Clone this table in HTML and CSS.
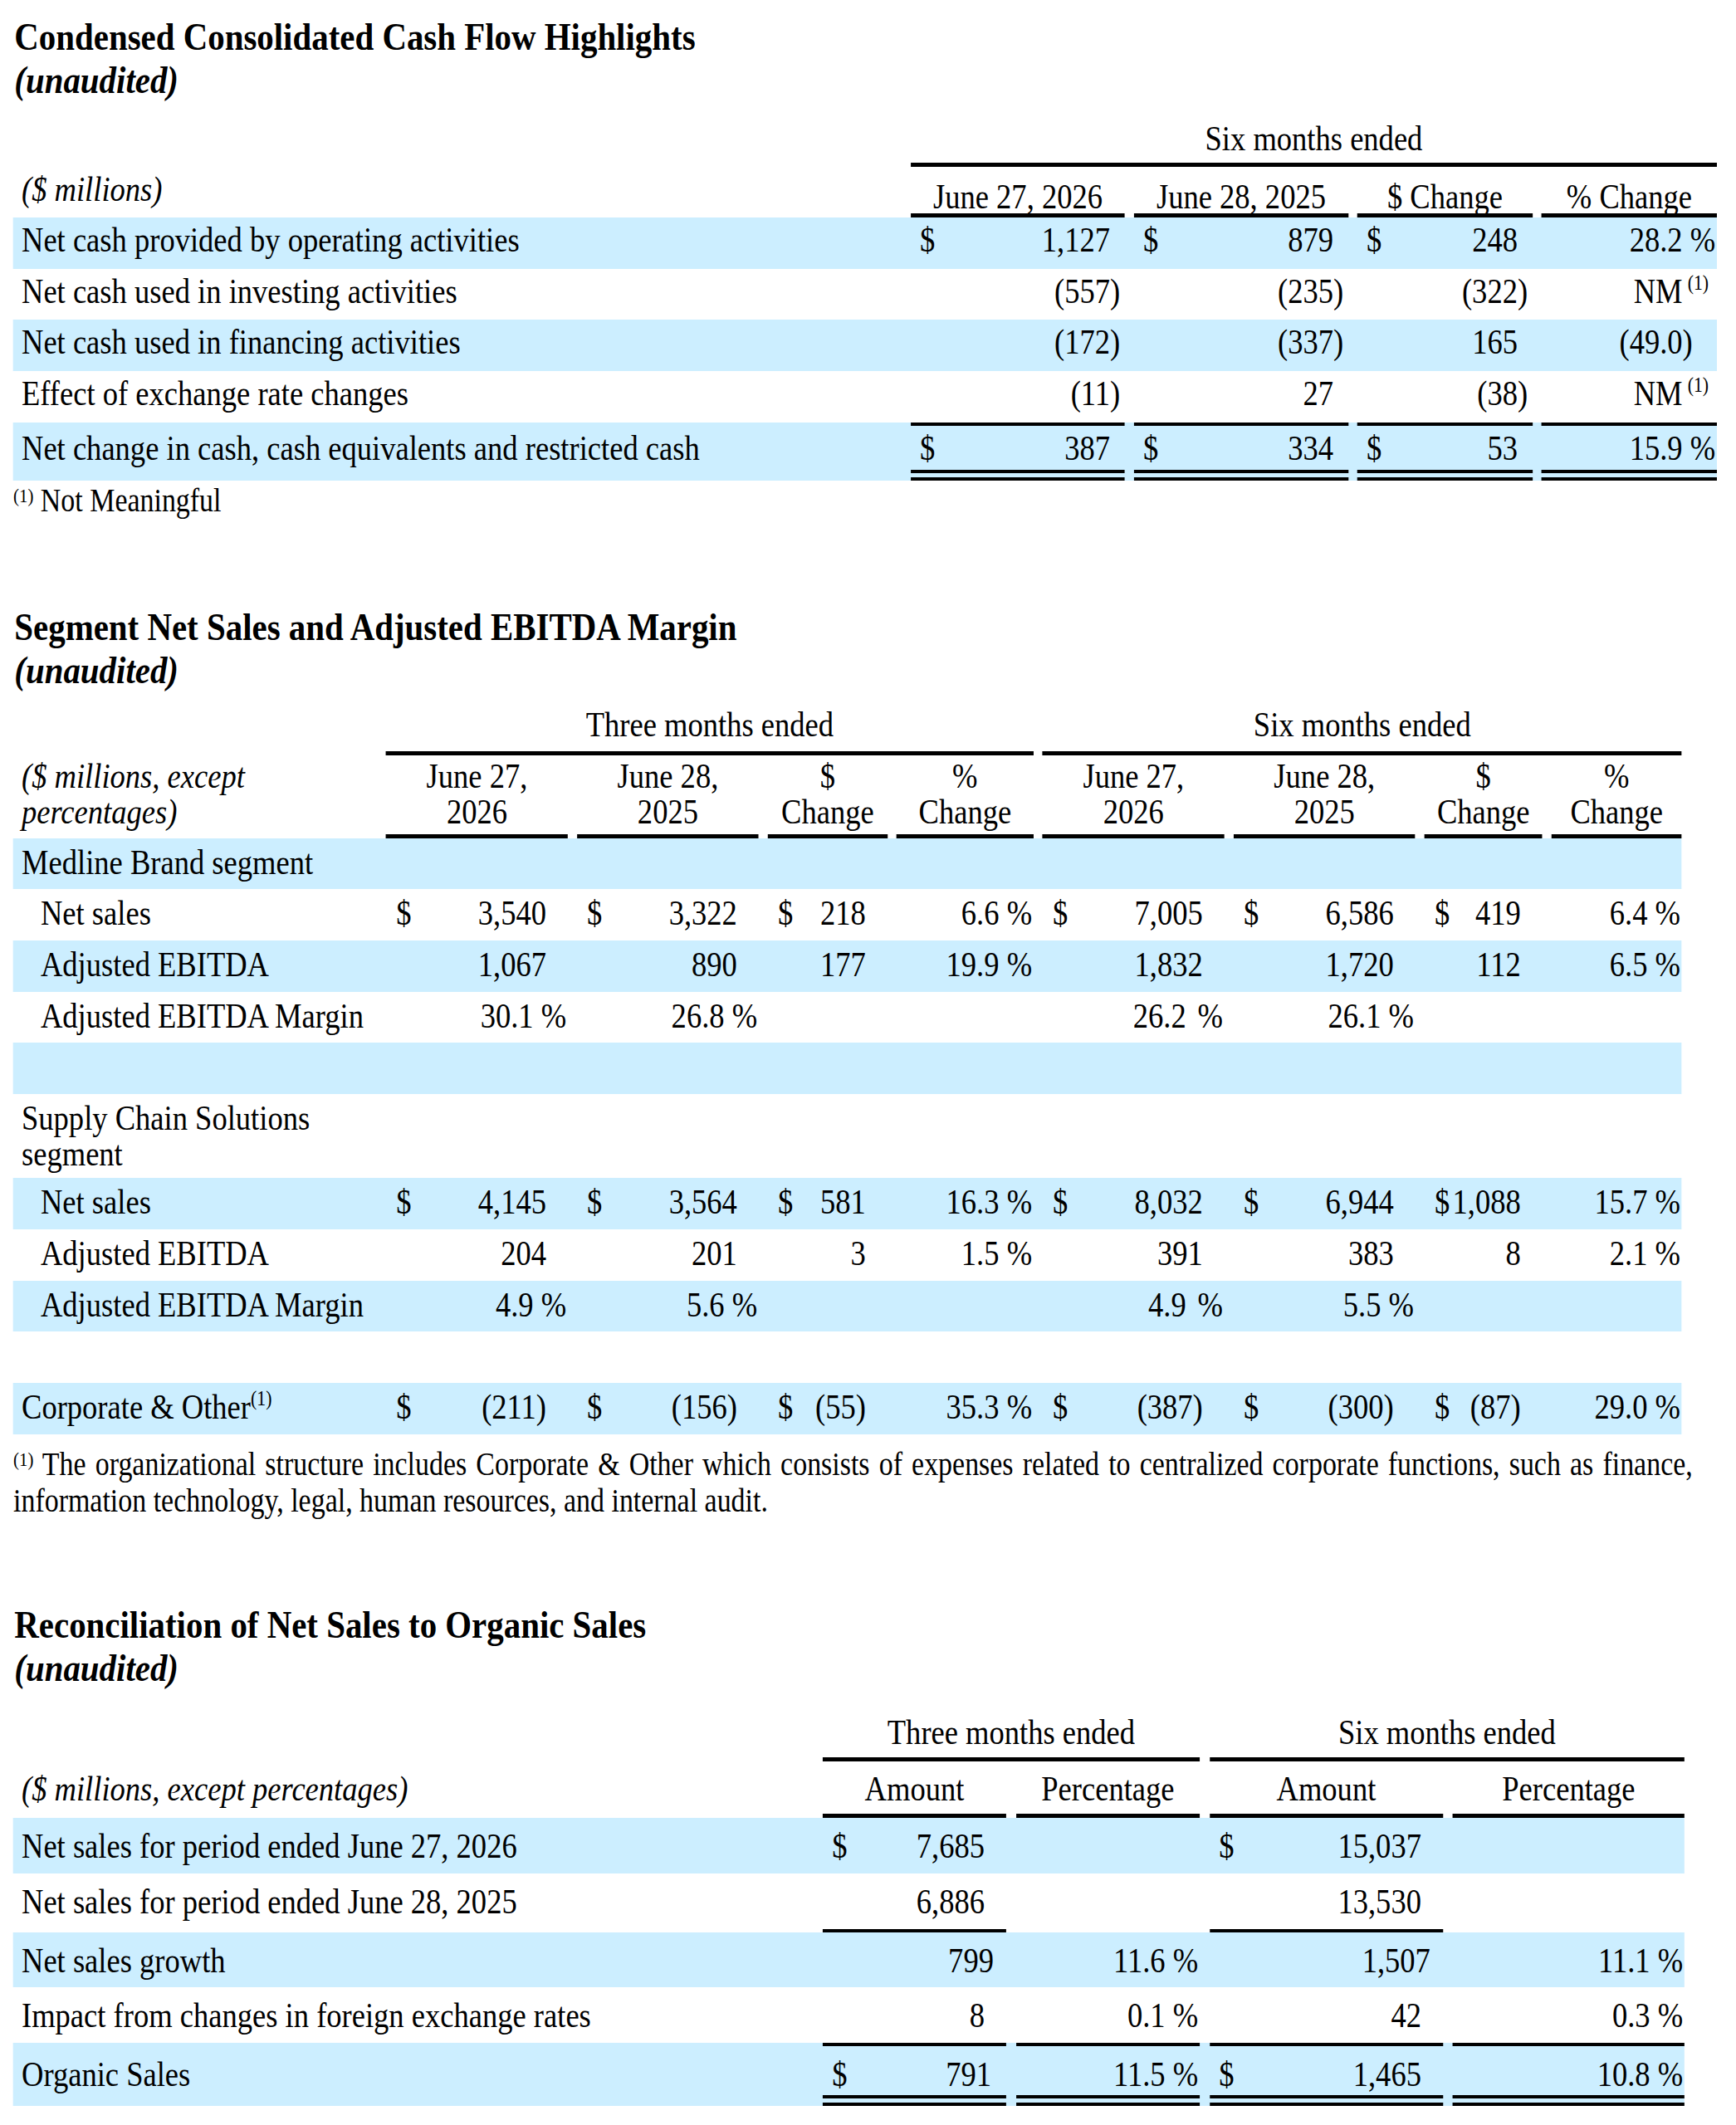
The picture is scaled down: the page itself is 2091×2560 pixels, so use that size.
FILE: index.html
```html
<!DOCTYPE html>
<html lang="en">
<head>
<meta charset="utf-8">
<title>Cash Flow Highlights</title>
<link rel="stylesheet" href="styles.css">
</head>
<body>
<div class="frame">
<div class="page">

<section class="sec s1">
  <div class="title">Condensed Consolidated Cash Flow Highlights<br><i>(unaudited)</i></div>
  <div class="tbl t1">
    <div class="r gr"><div></div><div class="g g-all">Six months ended</div></div>
    <div class="r hd">
      <div class="lh">($ millions)</div>
      <div class="h">June 27, 2026</div><div class="h">June 28, 2025</div><div class="h">$ Change</div><div class="h">% Change</div>
    </div>
    <div class="r bl">
      <div class="lb">Net cash provided by operating activities</div>
      <div class="v"><span class="cur">$</span><span class="n">1,127</span><span class="s"></span></div>
      <div class="v"><span class="cur">$</span><span class="n">879</span><span class="s"></span></div>
      <div class="v"><span class="cur">$</span><span class="n">248</span><span class="s"></span></div>
      <div class="v"><span class="n">28.2</span><span class="pc">%</span></div>
    </div>
    <div class="r">
      <div class="lb">Net cash used in investing activities</div>
      <div class="v"><span class="n">(557</span><span class="s">)</span></div>
      <div class="v"><span class="n">(235</span><span class="s">)</span></div>
      <div class="v"><span class="n">(322</span><span class="s">)</span></div>
      <div class="v"><span class="n">NM</span><span class="pn"><sup class="up">(1)</sup></span></div>
    </div>
    <div class="r bl">
      <div class="lb">Net cash used in financing activities</div>
      <div class="v"><span class="n">(172</span><span class="s">)</span></div>
      <div class="v"><span class="n">(337</span><span class="s">)</span></div>
      <div class="v"><span class="n">165</span><span class="s"></span></div>
      <div class="v"><span class="n">(49.0</span><span class="pp">)</span></div>
    </div>
    <div class="r">
      <div class="lb">Effect of exchange rate changes</div>
      <div class="v"><span class="n">(11</span><span class="s">)</span></div>
      <div class="v"><span class="n">27</span><span class="s"></span></div>
      <div class="v"><span class="n">(38</span><span class="s">)</span></div>
      <div class="v"><span class="n">NM</span><span class="pn"><sup class="up">(1)</sup></span></div>
    </div>
    <div class="r bl total">
      <div class="lb">Net change in cash, cash equivalents and restricted cash</div>
      <div class="v tot"><span class="cur">$</span><span class="n">387</span><span class="s"></span></div>
      <div class="v tot"><span class="cur">$</span><span class="n">334</span><span class="s"></span></div>
      <div class="v tot"><span class="cur">$</span><span class="n">53</span><span class="s"></span></div>
      <div class="v tot"><span class="n">15.9</span><span class="pc">%</span></div>
    </div>
  </div>
  <div class="fn fn1"><sup class="fs">(1)</sup> Not Meaningful</div>
</section>

<section class="sec s2">
  <div class="title">Segment Net Sales and Adjusted EBITDA Margin<br><i>(unaudited)</i></div>
  <div class="tbl t2">
    <div class="r gr"><div></div><div class="g g-a">Three months ended</div><div class="g g-b">Six months ended</div></div>
    <div class="r hd">
      <div class="lh">($ millions, except<br>percentages)</div>
      <div class="h">June 27,<br>2026</div><div class="h">June 28,<br>2025</div><div class="h">$<br>Change</div><div class="h">%<br>Change</div>
      <div class="h">June 27,<br>2026</div><div class="h">June 28,<br>2025</div><div class="h">$<br>Change</div><div class="h">%<br>Change</div>
    </div>
    <div class="r bl">
      <div class="lb">Medline Brand segment</div>
      <div></div><div></div><div></div><div></div><div></div><div></div><div></div><div></div>
    </div>
    <div class="r">
      <div class="lb ind">Net sales</div>
      <div class="v"><span class="cur">$</span><span class="n">3,540</span><span class="s"></span></div>
      <div class="v"><span class="cur">$</span><span class="n">3,322</span><span class="s"></span></div>
      <div class="v"><span class="cur">$</span><span class="n">218</span><span class="s"></span></div>
      <div class="v"><span class="n">6.6</span><span class="pc">%</span></div>
      <div class="v"><span class="cur">$</span><span class="n">7,005</span><span class="s"></span></div>
      <div class="v"><span class="cur">$</span><span class="n">6,586</span><span class="s"></span></div>
      <div class="v"><span class="cur">$</span><span class="n">419</span><span class="s"></span></div>
      <div class="v"><span class="n">6.4</span><span class="pc">%</span></div>
    </div>
    <div class="r bl">
      <div class="lb ind">Adjusted EBITDA</div>
      <div class="v"><span class="n">1,067</span><span class="s"></span></div>
      <div class="v"><span class="n">890</span><span class="s"></span></div>
      <div class="v"><span class="n">177</span><span class="s"></span></div>
      <div class="v"><span class="n">19.9</span><span class="pc">%</span></div>
      <div class="v"><span class="n">1,832</span><span class="s"></span></div>
      <div class="v"><span class="n">1,720</span><span class="s"></span></div>
      <div class="v"><span class="n">112</span><span class="s"></span></div>
      <div class="v"><span class="n">6.5</span><span class="pc">%</span></div>
    </div>
    <div class="r">
      <div class="lb ind">Adjusted EBITDA Margin</div>
      <div class="v"><span class="n">30.1</span><span class="pc">%</span></div>
      <div class="v"><span class="n">26.8</span><span class="pc">%</span></div>
      <div></div><div></div>
      <div class="v"><span class="n">26.2</span><span class="pc wide">%</span></div>
      <div class="v"><span class="n">26.1</span><span class="pc">%</span></div>
      <div></div><div></div>
    </div>
    <div class="r bl">
      <div></div><div></div><div></div><div></div><div></div><div></div><div></div><div></div><div></div>
    </div>
    <div class="r tall">
      <div class="lb wrap">Supply Chain Solutions<br>segment</div>
      <div></div><div></div><div></div><div></div><div></div><div></div><div></div><div></div>
    </div>
    <div class="r bl">
      <div class="lb ind">Net sales</div>
      <div class="v"><span class="cur">$</span><span class="n">4,145</span><span class="s"></span></div>
      <div class="v"><span class="cur">$</span><span class="n">3,564</span><span class="s"></span></div>
      <div class="v"><span class="cur">$</span><span class="n">581</span><span class="s"></span></div>
      <div class="v"><span class="n">16.3</span><span class="pc">%</span></div>
      <div class="v"><span class="cur">$</span><span class="n">8,032</span><span class="s"></span></div>
      <div class="v"><span class="cur">$</span><span class="n">6,944</span><span class="s"></span></div>
      <div class="v"><span class="cur">$</span><span class="n">1,088</span><span class="s"></span></div>
      <div class="v"><span class="n">15.7</span><span class="pc">%</span></div>
    </div>
    <div class="r">
      <div class="lb ind">Adjusted EBITDA</div>
      <div class="v"><span class="n">204</span><span class="s"></span></div>
      <div class="v"><span class="n">201</span><span class="s"></span></div>
      <div class="v"><span class="n">3</span><span class="s"></span></div>
      <div class="v"><span class="n">1.5</span><span class="pc">%</span></div>
      <div class="v"><span class="n">391</span><span class="s"></span></div>
      <div class="v"><span class="n">383</span><span class="s"></span></div>
      <div class="v"><span class="n">8</span><span class="s"></span></div>
      <div class="v"><span class="n">2.1</span><span class="pc">%</span></div>
    </div>
    <div class="r bl">
      <div class="lb ind">Adjusted EBITDA Margin</div>
      <div class="v"><span class="n">4.9</span><span class="pc">%</span></div>
      <div class="v"><span class="n">5.6</span><span class="pc">%</span></div>
      <div></div><div></div>
      <div class="v"><span class="n">4.9</span><span class="pc wide">%</span></div>
      <div class="v"><span class="n">5.5</span><span class="pc">%</span></div>
      <div></div><div></div>
    </div>
    <div class="r">
      <div></div><div></div><div></div><div></div><div></div><div></div><div></div><div></div><div></div>
    </div>
    <div class="r bl">
      <div class="lb">Corporate &amp; Other<sup class="up">(1)</sup></div>
      <div class="v"><span class="cur">$</span><span class="n">(211)</span><span class="s"></span></div>
      <div class="v"><span class="cur">$</span><span class="n">(156)</span><span class="s"></span></div>
      <div class="v"><span class="cur">$</span><span class="n">(55)</span><span class="s"></span></div>
      <div class="v"><span class="n">35.3</span><span class="pc">%</span></div>
      <div class="v"><span class="cur">$</span><span class="n">(387)</span><span class="s"></span></div>
      <div class="v"><span class="cur">$</span><span class="n">(300)</span><span class="s"></span></div>
      <div class="v"><span class="cur">$</span><span class="n">(87)</span><span class="s"></span></div>
      <div class="v"><span class="n">29.0</span><span class="pc">%</span></div>
    </div>
  </div>
  <p class="fn fn2"><span class="l1"><sup class="fs">(1)</sup> The organizational structure includes Corporate &amp; Other which consists of expenses related to centralized corporate functions, such as finance,</span> <span class="l2">information technology, legal, human resources, and internal audit.</span></p>
</section>

<section class="sec s3">
  <div class="title">Reconciliation of Net Sales to Organic Sales<br><i>(unaudited)</i></div>
  <div class="tbl t3">
    <div class="r gr"><div></div><div class="g g-a">Three months ended</div><div class="g g-b">Six months ended</div></div>
    <div class="r hd">
      <div class="lh">($ millions, except percentages)</div>
      <div class="h">Amount</div><div class="h">Percentage</div><div class="h">Amount</div><div class="h">Percentage</div>
    </div>
    <div class="r bl">
      <div class="lb">Net sales for period ended June 27, 2026</div>
      <div class="v"><span class="cur">$</span><span class="n">7,685</span><span class="s"></span></div>
      <div></div>
      <div class="v"><span class="cur">$</span><span class="n">15,037</span><span class="s"></span></div>
      <div></div>
    </div>
    <div class="r under">
      <div class="lb">Net sales for period ended June 28, 2025</div>
      <div class="v ul"><span class="n">6,886</span><span class="s"></span></div>
      <div></div>
      <div class="v ul"><span class="n">13,530</span><span class="s"></span></div>
      <div></div>
    </div>
    <div class="r bl">
      <div class="lb">Net sales growth</div>
      <div class="v sh"><span class="n">799</span><span class="s"></span></div>
      <div class="v"><span class="n">11.6</span><span class="pc">%</span></div>
      <div class="v sh"><span class="n">1,507</span><span class="s"></span></div>
      <div class="v"><span class="n">11.1</span><span class="pc">%</span></div>
    </div>
    <div class="r">
      <div class="lb">Impact from changes in foreign exchange rates</div>
      <div class="v"><span class="n">8</span><span class="s"></span></div>
      <div class="v"><span class="n">0.1</span><span class="pc">%</span></div>
      <div class="v"><span class="n">42</span><span class="s"></span></div>
      <div class="v"><span class="n">0.3</span><span class="pc">%</span></div>
    </div>
    <div class="r bl total">
      <div class="lb">Organic Sales</div>
      <div class="v tot sh2"><span class="cur">$</span><span class="n">791</span><span class="s"></span></div>
      <div class="v tot"><span class="n">11.5</span><span class="pc">%</span></div>
      <div class="v tot"><span class="cur">$</span><span class="n">1,465</span><span class="s"></span></div>
      <div class="v tot"><span class="n">10.8</span><span class="pc">%</span></div>
    </div>
  </div>
</section>

</div>
</div>
</body>
</html>
```

FILE: styles.css
```css
html, body {
  margin: 0;
  padding: 0;
  background: #ffffff;
  overflow-x: hidden;
}

.frame {
  width: 2091px;
  overflow: hidden;
}

/* The source document is set in a horizontally condensed Times face:
   the whole page is laid out at full width and condensed once. */
.page {
  width: 2400px;
  transform: scaleX(0.87);
  transform-origin: 0 0;
  font-family: "Liberation Serif", "Times New Roman", serif;
  font-size: 42px;
  color: #000000;
  padding-top: 18px;
}

.title {
  font-weight: 700;
  font-size: 47px;
  line-height: 52px;
  margin-left: 1.5px;
}
.title i { font-style: italic; }

.sec { margin-left: 18.4px; }
.s2 { margin-top: 104.7px; }
.s3 { margin-top: 101.2px; }

/* ---------- generic table rows ---------- */
.tbl { width: max-content; }
.r {
  display: grid;
  grid-template-columns: var(--cols);
  column-gap: var(--gap);
  min-height: var(--rh);
}
.r.bl { background: #cceeff; }
.r > div {
  padding-top: var(--pt);
  line-height: 43px;
}

.lb {
  padding-left: 11.5px;
  white-space: nowrap;
}
.lb.ind { padding-left: 37.9px; }
.lb.wrap { white-space: normal; }

.v {
  display: flex;
  align-items: baseline;
  padding-left: var(--cp);
}
.v .n {
  flex: 1;
  text-align: right;
  white-space: nowrap;
}
.v .s { width: var(--sw); flex: none; }
.v .pc {
  width: 47.5px;
  padding-left: 10.5px;
  box-sizing: border-box;
  flex: none;
}
.v .pc.wide { padding-left: 16px; width: 53px; }
.v .pp { width: 47.5px; flex: none; }
.v .pn {
  width: 47.5px;
  padding-left: 7px;
  box-sizing: border-box;
  flex: none;
}

.up {
  font-size: 25px;
  line-height: 0;
  vertical-align: 16px;
}
.fs {
  font-size: 24px;
  line-height: 0;
  vertical-align: 11px;
}

/* group header ("Six months ended") */
.r.gr { min-height: 0; }
.r.gr > div { padding-top: 0; }
.g {
  text-align: center;
  border-bottom: 5px solid #000000;
}
.g-all { grid-column: 2 / -1; }

/* column header row */
.r.hd { min-height: 0; }
.h {
  text-align: center;
  border-bottom: 5px solid #000000;
}
.lh {
  font-style: italic;
  padding-left: 11.5px;
}

/* totals */
.tot {
  border-top: 4px solid #000000;
  border-bottom: 13px double #000000;
}
.r.total > .lb { padding-top: calc(var(--pt) + 4px); }
.ul { border-bottom: 4px solid #000000; }

/* ---------- table 1 ---------- */
.t1 {
  --cols: 1229.9px 296.55px 296.55px 242.53px 242.53px;
  --gap: 12.64px;
  --pt: 6px;
  --rh: 61.7px;
  --sw: 20.7px;
  --cp: 12.6px;
}
.t1 .gr { margin-top: 24.3px; }
.t1 .g { line-height: 43px; padding-bottom: 6.7px; }
.t1 .hd > div { padding-top: 16px; line-height: 40px; }
.t1 .hd > .lh { padding-top: 7px; }
.t1 .r.total { min-height: 70.5px; }

.fn {
  font-size: 39px;
  margin: 0;
}
.fn1 { line-height: 44px; margin-top: 1.5px; }
.fn2 {
  line-height: 44px;
  margin-top: 14.4px;
  width: 2325px;
}
.fn2 .l1 {
  display: block;
  text-align: justify;
  text-align-last: justify;
}
.fn2 .l2 { display: block; }

/* ---------- table 2 ---------- */
.t2 {
  --cols: 503.45px 251.7px 251.7px 165.5px 189.66px 251.7px 251.7px 163.2px 180.5px;
  --gap: 12.64px;
  --pt: 8px;
  --rh: 61.7px;
  --sw: 29.9px;
  --cp: 14px;
}
.t2 .gr { margin-top: 18.2px; }
.t2 .g { line-height: 43px; padding-bottom: 10.7px; }
.t2 .g-a { grid-column: 2 / 6; }
.t2 .g-b { grid-column: 6 / 10; }
.t2 .hd > div { padding-top: 3.3px; padding-bottom: 5px; line-height: 43px; }
.t2 .r.tall { min-height: 101.2px; }

/* ---------- table 3 ---------- */
.t3 {
  --cols: 1106.9px 254px 254px 323px 320.7px;
  --gap: 13.79px;
  --pt: 13px;
  --rh: 66.5px;
  --sw: 29.9px;
  --cp: 13px;
}
.t3 .gr { margin-top: 31.2px; }
.t3 .g { line-height: 43px; padding-bottom: 7.7px; }
.t3 .g-a { grid-column: 2 / 4; }
.t3 .g-b { grid-column: 4 / 6; }
.t3 .hd > div { padding-top: 12.3px; padding-bottom: 8px; line-height: 43px; }
.t3 .r.under { min-height: 70.8px; }
.t3 .r.total { min-height: 76.3px; }
.t3 .sh .s { width: 17.3px; }
.t3 .sh2 .s { width: 20.7px; }
```
